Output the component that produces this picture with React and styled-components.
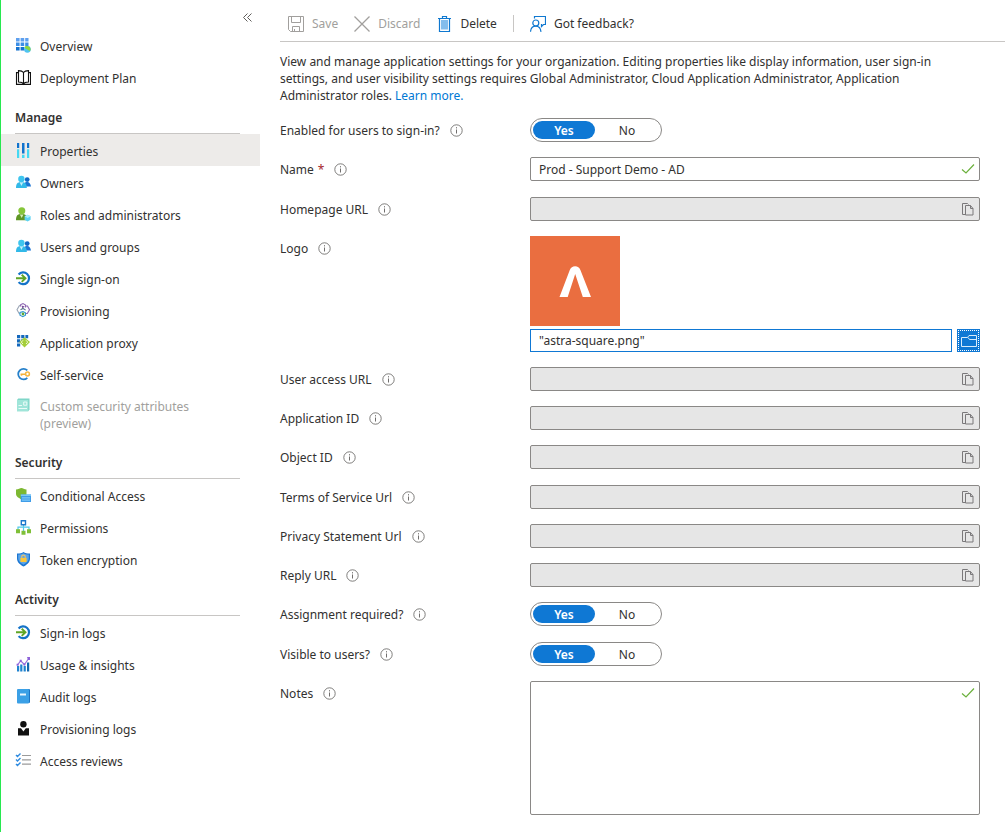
import { useState } from "react";
import styled, { createGlobalStyle } from "styled-components";

/* ---------- icons ---------- */

const OverviewIcon = () => (
  <Icon viewBox="0 0 16 16">
    <path fill="#5ea0ef" d="M1 0h3.6v3.6H1zM5.6 0h3.6v3.6H5.6zM10.2 0h3.3v3.6h-3.3z" />
    <path fill="#3b8ee6" d="M1 4.600h3.6v3.4H1zM5.6 4.600h3.6v3.4H5.6zM10.2 4.600h3.3v3.4h-3.3z" />
    <path fill="#1572cf" d="M1 9h3.6v3.5H1zM5.6 9h3.6v3.5H5.6z" />
    <circle cx="12.400" cy="11.300" r="3.400" fill="#50c4f0" />
    <path fill="#8fd63a" d="M9.400 9.200c1-1.300 3.200-1.800 4.700-.7 1.600 1.100 1.800 2.900 1.100 4.300-1 .2-1.300-.6-2.300-.8-.6-1.200-2.500-.9-3.500-2.800z" />
  </Icon>
);

const BookIcon = () => (
  <Icon viewBox="0 0 16 16" fill="none" stroke="#111" strokeWidth="1.100">
    <path d="M8.500 2.500C7.500 1 5.500.6 3.500.6V12c2 0 4 0 5 2 1-2 3-2 5-2V.6c-2 0-4 .4-5 1.900zM8.500 2.300V14" />
    <path d="M3.500 2.600h-2v11.800h14V2.600h-2" />
  </Icon>
);

const PropertiesIcon = () => (
  <Icon viewBox="0 0 16 16">
    <path fill="#1173cd" d="M2 0h2.200v5H2zM7 0h2.500v10.500H7zM12 0h2.200v5H12z" />
    <path fill="#45d8f2" d="M2 6.200h2.200V15H2zM7 11.800h2.500V15H7zM12 6.200h2.200V15H12z" />
  </Icon>
);

const PeopleIcon = () => (
  <Icon viewBox="0 0 16 16">
    <circle cx="12.200" cy="4.600" r="2.400" fill="#1067c4" />
    <path fill="#1a74d4" d="M9 11.500V9C9.500 7.500 10.500 7 12.300 7c2.200 0 3 1.500 3.700 4.500z" />
    <path fill="#32b9e8" d="M1 13C1 9 2.200 7 6.300 7s5.500 2 5.500 6z" />
    <path fill="#c6f0fb" d="M4.600 7.200h3.600L6.500 11z" />
    <circle cx="6.400" cy="4" r="3.200" fill="#3ec5ee" />
  </Icon>
);

const RolesIcon = () => (
  <Icon viewBox="0 0 16 16">
    <path fill="#5e9624" d="M1 13.200C1 8.500 2.500 7 6.600 7s5.600 1.500 5.600 6.200z" />
    <path fill="#d4edb5" d="M4.800 7.400h3.600L6.700 11z" />
    <circle cx="6.800" cy="3.700" r="3.500" fill="#86c63a" />
    <path fill="#5cd2f2" d="M12.600 7.800l3 1.500v3.400l-3 1.900-3-1.900V9.300z" />
    <path fill="#aeeefb" d="M12.600 7.800l3 1.500-3 1.700-3-1.700z" />
  </Icon>
);

const SignInIcon = () => (
  <Icon viewBox="0 0 16 16" fill="none">
    <path stroke="#1473c8" strokeWidth="2.200" d="M3.600 3.500a5.900 5.900 0 1 1 0 7.600" />
    <path stroke="#5fa526" strokeWidth="1.900" d="M1 7.300h9.200M6.700 3.700l3.800 3.600-3.800 3.600" />
  </Icon>
);

const ProvisioningIcon = () => (
  <Icon viewBox="0 0 16 16" fill="none" strokeWidth="1.100">
    <path stroke="#9aa5b5" d="M6 2.500L4.300 2.800 2 6.800l2.300 4h1" />
    <path stroke="#8f68b3" d="M5.500 3.500V1.800L8 .6l2.500 1.500v2.400M10.500 3h2l2 3.800-2.200 3.700h-1.800" />
    <path stroke="#3096d2" d="M5 9.500v2.700l2.800 1.500 2.700-1.500V9.800L8 8.600z" />
    <path fill="#7a4b9c" d="M6.500 2.600l3.200 1-2.300 2z" />
    <circle cx="8" cy="11" r="1.400" fill="#5da635" />
    <path stroke="#5b768d" d="M5.500 6.800L8 5.500l2.700 1.600" />
  </Icon>
);

const ProxyIcon = () => (
  <Icon viewBox="0 0 16 16">
    <path fill="#1368bd" d="M2 0h3.200v3.200H2zM6.200 0h3.200v3.200H6.200zM10.400 0h2.800v3.200h-2.800zM2 4.200h3.200v3.200H2zM6.200 4.200h3.200v3.200H6.200zM2 8.400h3.200v3H2z" />
    <path fill="#a4ce39" d="M9.500 2.200l5.500 4.900-5.500 5.400-5.300-5.400z" />
    <path stroke="#f1f9db" strokeWidth="1" fill="none" d="M8 5.300L6.300 7.100 8 9M11 5.300l1.700 1.800L11 9" />
  </Icon>
);

const SelfServiceIcon = () => (
  <Icon viewBox="0 0 16 16" fill="none">
    <path stroke="#2680ca" strokeWidth="1.800" d="M12.300 3.400A5.300 5.300 0 1 0 12.300 10.800" />
    <path stroke="#f4b13b" strokeWidth="1.600" d="M5.500 7.200h5.500M6.500 7.200v1.600" />
    <circle cx="12.500" cy="7" r="1.900" stroke="#f6b740" strokeWidth="1.500" />
  </Icon>
);

const AttributesIcon = () => (
  <Icon viewBox="0 0 16 16">
    <path fill="#7fd6c8" d="M3.200.6h11.300v10.800l-1.300 1.800H2V2z" />
    <path fill="#a0e5d9" d="M2 2h11.200v11.200H2z" />
    <path stroke="#e9fbf8" fill="none" d="M3.500 7.500h3.500M3.500 10.500h8.500M8.700 4h3.100v3.200H8.700z" />
  </Icon>
);

const ConditionalIcon = () => (
  <Icon viewBox="0 0 16 16">
    <path fill="#7db832" d="M1 1.400C3.500 1.400 4.800 0 6.400 0s2.900 1.400 5.100 1.400v4.400c0 2.800-2.700 4.300-5.100 5.700C4 10.100 1 8.600 1 5.800z" />
    <path fill="#3f9ce8" d="M5.800 6.500H16V14H5.800z" />
    <path fill="#7cc8f7" d="M5.800 6.500H16v1.600H5.800zM7 9.200h8v1.200H7zM7 11.500h8v1.200H7z" />
  </Icon>
);

const PermissionsIcon = () => (
  <Icon viewBox="0 0 16 16" fill="none">
    <path stroke="#50c9ea" strokeWidth="1.200" d="M8.500 4.500V11M3 10V7.200h11V10" />
    <path stroke="#1b78cc" strokeWidth="1.400" d="M6.300.7h4.200v4H6.300z" />
    <path fill="#7fbf38" d="M1 9.200h4v4H1zM6.500 10.800h4v4h-4zM12 9.200h4v4h-4z" />
  </Icon>
);

const TokenIcon = () => (
  <Icon viewBox="0 0 16 16">
    <path fill="#1b76d2" d="M8.500 0C10 1.200 12 1.600 15 1.600v4.800c0 4-3.500 6.400-6.500 8.200C5.500 12.800 2 10.400 2 6.400V1.600C5 1.600 7 1.200 8.500 0z" />
    <path fill="#5ba4e8" d="M8.500 1.200c1.300.9 3 1.300 5.300 1.400v3.500c0 3.300-2.800 5.200-5.300 6.700-2.500-1.500-5.300-3.400-5.300-6.700V2.600c2.300-.1 4-.5 5.300-1.400z" />
    <path fill="none" stroke="#e9c36c" strokeWidth="1.200" d="M6.700 5.800V5c0-2.400 3.600-2.400 3.600 0v.8" />
    <path fill="#fcc63a" d="M5.400 5.800h6.200v4.200H5.400z" />
  </Icon>
);

const UsageIcon = () => (
  <Icon viewBox="0 0 16 16">
    <path fill="#1f83d0" d="M2 9h2.200v5.500H2zM5.200 7.500h2.200v7H5.200zM8.600 9h2.200v5.500H8.600z" />
    <path fill="#1267ae" d="M12 5.500h2.200v9H12z" />
    <path fill="none" stroke="#9a73dd" strokeWidth="1.200" d="M2.500 7.800l3.200-4 3.700 3.700 4.300-6" />
    <path fill="#8e62d9" d="M4.700 2.700h2v2h-2zM8.400 6.500h2v2h-2zM12 0h3v3h-2zM1.600 6.700h2v2h-2z" />
  </Icon>
);

const AuditIcon = () => (
  <Icon viewBox="0 0 16 16">
    <rect x="3" y="0" width="12" height="14" rx="1" fill="#1b75c5" />
    <rect x="2" y="0" width="12" height="14.500" rx="1" fill="#3ba0e6" />
    <path fill="#e9f6ff" d="M5 4.500h6v2H5z" />
  </Icon>
);

const PersonIcon = () => (
  <Icon viewBox="0 0 16 16" fill="#111">
    <circle cx="8.400" cy="3.200" r="3.200" />
    <path d="M3 7.300h3l2.400 3.200 2.400-3.200H14v7.200H3z" />
  </Icon>
);

const ReviewsIcon = () => (
  <Icon viewBox="0 0 16 16" fill="none">
    <path stroke="#9b9b9b" strokeWidth="1.200" d="M7 2.500h9M7 6.800h9M7 11.200h9" />
    <path stroke="#2f8be0" strokeWidth="1.400" d="M1 2l1.500 1.500L5.500.5M1 6.500L2.500 8l3-3M1 11l1.500 1.500 3-3" />
  </Icon>
);

const SaveIcon = () => (
  <Icon viewBox="0 0 16 16" fill="none" stroke="#a19f9d">
    <path d="M.5.5h15v15h-13l-2-2zM3.500.5v6h9v-6M4.500 15.500v-5h7v5M6.500 13v2.500" />
  </Icon>
);

const DiscardIcon = () => (
  <Icon viewBox="0 0 16 16" fill="none" stroke="#a19f9d" strokeWidth="1.300">
    <path d="M.5.5l15 15M15.500.5l-15 15" />
  </Icon>
);

const DeleteIcon = () => (
  <Icon viewBox="0 0 16 16" fill="none" stroke="#0f78d0">
    <path fill="#83bdec" stroke="none" d="M5 4h7v9.500H5z" />
    <path d="M2 2.500h13M6.500 2V.5h4V2M3.500 2.500v13h10v-13" strokeWidth="1.200" />
  </Icon>
);

const FeedbackIcon = () => (
  <Icon viewBox="0 0 16 16" fill="none" stroke="#0f78d0" strokeWidth="1.200">
    <path d="M4.500 2.500v-2h11v8h-2l-2 2v-2.500" />
    <circle cx="5.800" cy="7" r="3" />
    <path d="M.5 15.800C.8 12 3 10.200 5.800 10.200S10.500 12 11 15.800" />
  </Icon>
);

const InfoIcon = () => (
  <InfoSvg viewBox="0 0 13 13" fill="none" stroke="#605e5c">
    <circle cx="6.500" cy="6.500" r="5.700" strokeWidth=".8" />
    <path d="M6.500 5.500v4M6.500 3.200v1.200" strokeWidth=".9" />
  </InfoSvg>
);

const CheckIcon = () => (
  <FieldSvg viewBox="0 0 14 14" fill="none" stroke="#6bb03c" strokeWidth="1.200">
    <path d="M1 7.500l4 3.500 8-8.500" />
  </FieldSvg>
);

const CopyIcon = () => (
  <FieldSvg viewBox="0 0 14 14" fill="none" stroke="#7a787a">
    <path d="M4 12.500H1.500v-11h5l1 1" />
    <path d="M4.500 3.500h5l2.500 3v6.500H4.500zM9.500 3.500v3H12" />
  </FieldSvg>
);

const FolderIcon = () => (
  <Icon viewBox="0 0 16 16" fill="none" stroke="#d8ecfb">
    <path d="M.5 4.500h6l1.500-2h7.500v11H.5zM7 4.500l1.500 2h7" />
  </Icon>
);

const AstraLogo = () => (
  <LogoSvg viewBox="0 0 90 90" role="img" aria-label="Application logo">
    <rect width="90" height="90" fill="#ea6e40" />
    <path fill="#fff" d="M29.500 61L39.800 34c1.200-2.700 2.700-3.800 5.300-3.800s4.200 1.100 5.300 3.800L61 61h-8.200l-7.600-23L37.700 61z" />
  </LogoSvg>
);

/* ---------- data ---------- */

const menu = [
  {
    items: [
      { label: "Overview", icon: <OverviewIcon /> },
      { label: "Deployment Plan", icon: <BookIcon /> },
    ],
  },
  {
    title: "Manage",
    items: [
      { label: "Properties", icon: <PropertiesIcon />, active: true },
      { label: "Owners", icon: <PeopleIcon /> },
      { label: "Roles and administrators", icon: <RolesIcon /> },
      { label: "Users and groups", icon: <PeopleIcon /> },
      { label: "Single sign-on", icon: <SignInIcon /> },
      { label: "Provisioning", icon: <ProvisioningIcon /> },
      { label: "Application proxy", icon: <ProxyIcon /> },
      { label: "Self-service", icon: <SelfServiceIcon /> },
      { label: "Custom security attributes (preview)", icon: <AttributesIcon />, disabled: true },
    ],
  },
  {
    title: "Security",
    items: [
      { label: "Conditional Access", icon: <ConditionalIcon /> },
      { label: "Permissions", icon: <PermissionsIcon /> },
      { label: "Token encryption", icon: <TokenIcon /> },
    ],
  },
  {
    title: "Activity",
    items: [
      { label: "Sign-in logs", icon: <SignInIcon /> },
      { label: "Usage & insights", icon: <UsageIcon /> },
      { label: "Audit logs", icon: <AuditIcon /> },
      { label: "Provisioning logs", icon: <PersonIcon /> },
      { label: "Access reviews", icon: <ReviewsIcon /> },
    ],
  },
];

/* ---------- form parts ---------- */

const Toggle = ({ name, label }) => {
  const [value, setValue] = useState("Yes");

  return (
    <StRow>
      <StLabel as="span" id={`${name}-label`}>
        {label}
        <InfoIcon />
      </StLabel>
      <StToggle role="radiogroup" aria-labelledby={`${name}-label`}>
        {["Yes", "No"].map((option) => (
          <StOption key={option} $on={value === option}>
            <input
              type="radio"
              name={name}
              value={option}
              checked={value === option}
              onChange={() => setValue(option)}
            />
            {option}
          </StOption>
        ))}
      </StToggle>
    </StRow>
  );
};

const CopyField = ({ name, label }) => (
  <StRow>
    <StLabel htmlFor={name}>
      {label}
      <InfoIcon />
    </StLabel>
    <StField $readOnly>
      <StInput id={name} type="text" readOnly />
      <StCopy type="button" aria-label={`Copy ${label}`}>
        <CopyIcon />
      </StCopy>
    </StField>
  </StRow>
);

const App = () => {
  const [name, setName] = useState("Prod - Support Demo - AD");
  const [notes, setNotes] = useState("");

  return (
    <>
      <GlobalStyle />
      <StPage>
        <StSidebar>
          <StCollapse type="button" aria-label="Collapse menu">
            <svg width="9" height="9" viewBox="0 0 9 9" fill="none" stroke="#605e5c">
              <path d="M4.500.5l-4 4 4 4M8.500.5l-4 4 4 4" />
            </svg>
          </StCollapse>
          {menu.map((group, i) => (
            <div key={i}>
              {group.title && <StGroupTitle>{group.title}</StGroupTitle>}
              {group.items.map((item) => (
                <StMenuItem
                  key={item.label}
                  href="#"
                  $active={item.active}
                  $disabled={item.disabled}
                >
                  {item.icon}
                  <span>{item.label}</span>
                </StMenuItem>
              ))}
            </div>
          ))}
        </StSidebar>

        <StMain>
          <StToolbar>
            <StTool type="button" disabled>
              <SaveIcon />
              Save
            </StTool>
            <StTool type="button" disabled>
              <DiscardIcon />
              Discard
            </StTool>
            <StTool type="button">
              <DeleteIcon />
              Delete
            </StTool>
            <StDivider />
            <StTool type="button">
              <FeedbackIcon />
              Got feedback?
            </StTool>
          </StToolbar>

          <StContent>
            <StIntro>
              View and manage application settings for your organization. Editing properties like
              display information, user sign-in settings, and user visibility settings requires
              Global Administrator, Cloud Application Administrator, Application Administrator
              roles. <a href="#">Learn more.</a>
            </StIntro>

            <StForm>
              <StSection>
                <Toggle name="enabled" label="Enabled for users to sign-in?" />
                <StRow>
                  <StLabel htmlFor="name">
                    Name <StRequired>*</StRequired>
                    <InfoIcon />
                  </StLabel>
                  <StField>
                    <StInput
                      id="name"
                      type="text"
                      value={name}
                      onChange={(e) => setName(e.target.value)}
                    />
                    <CheckIcon />
                  </StField>
                </StRow>
              </StSection>

              <StSection>
                <CopyField name="homepage" label="Homepage URL" />
                <StRow>
                  <StLabel htmlFor="logo">
                    Logo
                    <InfoIcon />
                  </StLabel>
                  <StLogoBox>
                    <AstraLogo />
                    <StUpload>
                      <StFileName id="logo" type="text" readOnly value={'"astra-square.png"'} />
                      <StBrowse type="button" aria-label="Browse">
                        <FolderIcon />
                      </StBrowse>
                    </StUpload>
                  </StLogoBox>
                </StRow>
                <CopyField name="access" label="User access URL" />
                <CopyField name="appId" label="Application ID" />
                <CopyField name="objectId" label="Object ID" />
              </StSection>

              <StSection>
                <CopyField name="terms" label="Terms of Service Url" />
                <CopyField name="privacy" label="Privacy Statement Url" />
                <CopyField name="reply" label="Reply URL" />
                <Toggle name="assignment" label="Assignment required?" />
              </StSection>

              <StSection>
                <Toggle name="visible" label="Visible to users?" />
                <StRow>
                  <StLabel htmlFor="notes">
                    Notes
                    <InfoIcon />
                  </StLabel>
                  <StNotesField>
                    <StTextarea
                      id="notes"
                      value={notes}
                      onChange={(e) => setNotes(e.target.value)}
                    />
                    <CheckIcon />
                  </StNotesField>
                </StRow>
              </StSection>
            </StForm>
          </StContent>
        </StMain>
      </StPage>
    </>
  );
};

export default App;

const GlobalStyle = createGlobalStyle`
  * {
    box-sizing: border-box;
  }
  body {
    margin: 0;
    background: #fff;
    color: #323130;
  }
  body, button, input, textarea {
    font-family: "Noto Sans", "Open Sans", sans-serif;
    font-size: 12px;
    line-height: 17px;
  }
  button {
    padding: 0;
    border: none;
    background: none;
    color: inherit;
    cursor: pointer;
  }
`;

const Icon = styled.svg`
  flex: none;
  width: 16px;
  height: 16px;
`;

const InfoSvg = styled.svg`
  flex: none;
  width: 13px;
  height: 13px;
  margin-left: 10px;
`;

const FieldSvg = styled.svg`
  display: block;
  flex: none;
  width: 14px;
  height: 14px;
`;

const LogoSvg = styled.svg`
  display: block;
  width: 90px;
  height: 90px;
`;

const StPage = styled.div`
  display: flex;
  min-height: 100vh;
  border-left: 1px solid #27e84f;
`;

const StSidebar = styled.nav`
  display: flex;
  flex-direction: column;
  flex: none;
  width: 259px;
`;

const StCollapse = styled.button`
  display: flex;
  align-self: flex-end;
  align-items: flex-end;
  height: 29px;
  padding: 0 8px 7px;
`;

const StGroupTitle = styled.h2`
  height: 41px;
  margin: 0 20px 0 14px;
  padding-top: 16px;
  border-bottom: 1px solid #c8c6c4;
  font-size: 12px;
  line-height: 17px;
  font-weight: 600;
`;

const StMenuItem = styled.a`
  display: flex;
  align-items: flex-start;
  gap: 9px;
  min-height: 32px;
  padding: ${({ $disabled }) => ($disabled ? "8px 40px 6px 14px" : "9px 40px 5px 14px")};
  background: ${({ $active }) => ($active ? "#edebe9" : "transparent")};
  color: ${({ $disabled }) => ($disabled ? "#a19f9d" : "inherit")};
  text-decoration: none;
`;

const StMain = styled.main`
  flex: 1;
  min-width: 0;
  padding-left: 20px;
`;

const StToolbar = styled.div`
  display: flex;
  align-items: center;
  gap: 16px;
  height: 42px;
  padding: 6px 8px 0;
  border-bottom: 1px solid #c8c6c4;
`;

const StTool = styled.button`
  display: flex;
  align-items: center;
  gap: 8px;

  &:disabled {
    color: #a19f9d;
    cursor: default;
  }
`;

const StDivider = styled.span`
  width: 1px;
  height: 17px;
  background: #c8c6c4;
`;

const StContent = styled.div`
  padding: 11px 25px 16px 0;
`;

const StIntro = styled.p`
  margin: 0 0 14px;

  a {
    color: #0078d4;
    text-decoration: none;
  }
`;

const StForm = styled.form`
  display: grid;
  gap: 16px;
`;

const StSection = styled.div`
  display: grid;
  gap: 15px;
`;

const StRow = styled.div`
  display: grid;
  grid-template-columns: 250px minmax(0, 1fr);
  align-items: start;
`;

const StLabel = styled.label`
  display: flex;
  align-items: center;
  height: 24px;
`;

const StRequired = styled.span`
  margin-left: 4px;
  color: #a4262c;
`;

const StToggle = styled.div`
  display: flex;
  width: 132px;
  height: 24px;
  padding: 2px;
  border: 1px solid #8a8886;
  border-radius: 12px;
`;

const StOption = styled.label`
  display: flex;
  align-items: center;
  justify-content: center;
  width: 62px;
  height: 18px;
  border-radius: 9px;
  background: ${({ $on }) => ($on ? "#0f78d4" : "transparent")};
  color: ${({ $on }) => ($on ? "#fff" : "inherit")};
  font-weight: ${({ $on }) => ($on ? 600 : 400)};
  cursor: pointer;

  &:last-child {
    flex: 1;
  }

  input {
    appearance: none;
    width: 0;
    height: 0;
    margin: 0;
  }
`;

const StField = styled.div`
  display: flex;
  align-items: center;
  height: 24px;
  padding: 0 4px 0 8px;
  border: 1px solid #8a8886;
  border-radius: 2px;
  background: ${({ $readOnly }) => ($readOnly ? "#e6e6e6" : "#fff")};
`;

const StInput = styled.input`
  flex: 1;
  min-width: 0;
  padding: 0;
  border: none;
  outline: none;
  background: transparent;
  color: inherit;
`;

const StCopy = styled.button`
  flex: none;
`;

const StLogoBox = styled.div`
  display: grid;
  gap: 3px;
`;

const StUpload = styled.div`
  display: flex;
  gap: 5px;
`;

const StFileName = styled(StInput)`
  height: 23px;
  padding: 0 8px;
  border: 1px solid #0f78d4;
  background: #fff;
`;

const StBrowse = styled.button`
  display: flex;
  align-items: center;
  justify-content: center;
  flex: none;
  width: 23px;
  height: 23px;
  border: 1px solid #0f78d4;
  background: #0f78d4;
  outline: 1px dotted #fff;
  outline-offset: -2px;
`;

const StNotesField = styled(StField)`
  align-items: flex-start;
  height: 134px;
  padding: 4px 4px 4px 8px;
`;

const StTextarea = styled.textarea`
  flex: 1;
  align-self: stretch;
  padding: 0;
  border: none;
  outline: none;
  background: transparent;
  color: inherit;
  resize: none;
`;
